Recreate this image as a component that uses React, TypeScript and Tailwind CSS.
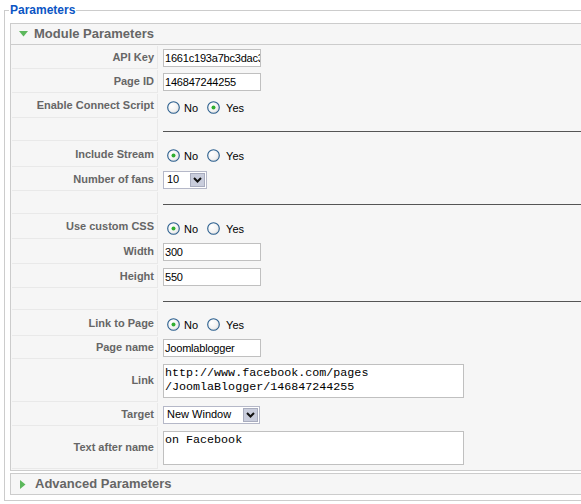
import React from "react";

const label = "text-[11px] font-bold text-[#666] text-right pr-[3px]";

function Radio({ checked }: { checked?: boolean }) {
  return (
    <svg width="13" height="13" viewBox="0 0 13 13" className="shrink-0">
      <defs>
        <radialGradient id="rg" cx="0.35" cy="0.35" r="0.8">
          <stop offset="0" stopColor="#ffffff" />
          <stop offset="0.6" stopColor="#f2f2f2" />
          <stop offset="1" stopColor="#d4d4d4" />
        </radialGradient>
      </defs>
      <circle cx="6.5" cy="6.5" r="5.8" fill="url(#rg)" stroke="#2b5f8e" strokeWidth="1.1" />
      {checked && <circle cx="6.5" cy="6.5" r="2" fill="#2fae2f" />}
    </svg>
  );
}

function RadioPair({ yes }: { yes?: boolean }) {
  return (
    <div className="flex items-center ml-[4px] mt-[2px] text-[11px] text-black">
      <Radio checked={!yes} />
      <span className="ml-[4px] mt-[2px]">No</span>
      <span className="ml-[9px]">
        <Radio checked={yes} />
      </span>
      <span className="ml-[6px] mt-[2px]">Yes</span>
    </div>
  );
}

function Select({ value, w }: { value: string; w: string }) {
  return (
    <div className={`${w} h-[18px] flex items-center bg-white border border-[#b5b8c8] text-[11px] text-black`}>
      <span className="flex-1 pl-[3px]">{value}</span>
      <span className="w-[15px] h-[14px] mr-px flex items-center justify-center bg-[#c9cddc] border border-[#a8acbe]">
        <svg width="9" height="6" viewBox="0 0 9 6">
          <path d="M1 1 L4.5 4.5 L8 1" fill="none" stroke="#111" strokeWidth="2" />
        </svg>
      </span>
    </div>
  );
}

function Input({ value }: { value: string }) {
  return (
    <div className="w-[98px] h-[18px] bg-white border border-[#c0c0c0] text-[11px] tracking-[-0.2px] text-black pl-px leading-[16px] overflow-hidden whitespace-nowrap">
      {value}
    </div>
  );
}

function TextArea({ lines }: { lines: string[] }) {
  return (
    <div className="w-[301px] h-[34px] bg-white border border-[#c0c0c0] pl-px pt-px text-[11.7px] leading-[14px] text-black font-['Liberation_Mono',monospace]">
      {lines.map((l) => (
        <div key={l}>{l}</div>
      ))}
    </div>
  );
}

function Row({ name, h, children }: { name?: string; h: string; children?: React.ReactNode }) {
  return (
    <div className={`flex ${h}`}>
      <div className={`w-[146px] shrink-0 flex items-center justify-end bg-[#f6f6f6] border-b border-r border-[#e9e9e9] ${label}`}>
        {name}
      </div>
      <div className="flex-1 flex items-center pl-[5px]">{children}</div>
    </div>
  );
}

function Rule() {
  return <div className="w-full border-t border-[#555] mt-[3px]" />;
}

export default function App() {
  return (
    <div className="w-full h-[504px] overflow-hidden bg-white font-['Liberation_Sans',Arial,sans-serif]">
      <div className="w-[640px]">
        <fieldset className="ml-[4px] mt-[3px] border border-[#ccc] px-[5px] pb-[5px]">
          <legend className="ml-[-1px] px-px text-[12px] font-bold text-[#0b55c4] leading-[15px]">
            Parameters
          </legend>

          {/* MODULE PARAMETERS */}
          <div className="mt-[5px] border border-[#ccc] bg-[#f6f6f6]">
            <div className="h-[21px] flex items-center pl-[8px] border-b border-[#ccc] text-[13px] font-bold text-[#666]">
              <svg width="9" height="6" viewBox="0 0 9 6" className="mr-[6px]">
                <path d="M0 0 H9 L4.5 5.5 Z" fill="#5cb85c" />
              </svg>
              Module Parameters
            </div>
            <div className="flex flex-col gap-px p-px">
              <Row name="API Key" h="h-[23px]">
                <Input value="1661c193a7bc3dac3" />
              </Row>
              <Row name="Page ID" h="h-[23px]">
                <Input value="146847244255" />
              </Row>
              <Row name="Enable Connect Script" h="h-[24px]">
                <RadioPair yes />
              </Row>
              <Row h="h-[22px]">
                <Rule />
              </Row>
              <Row name="Include Stream" h="h-[25px]">
                <RadioPair />
              </Row>
              <Row name="Number of fans" h="h-[23px]">
                <Select value="10" w="w-[44px]" />
              </Row>
              <Row h="h-[22px]">
                <Rule />
              </Row>
              <Row name="Use custom CSS" h="h-[24px]">
                <RadioPair />
              </Row>
              <Row name="Width" h="h-[24px]">
                <Input value="300" />
              </Row>
              <Row name="Height" h="h-[23px]">
                <Input value="550" />
              </Row>
              <Row h="h-[21px]">
                <Rule />
              </Row>
              <Row name="Link to Page" h="h-[25px]">
                <RadioPair />
              </Row>
              <Row name="Page name" h="h-[22px]">
                <Input value="Joomlablogger" />
              </Row>
              <Row name="Link" h="h-[42px]">
                <TextArea lines={["http://www.facebook.com/pages", "/JoomlaBlogger/146847244255"]} />
              </Row>
              <Row name="Target" h="h-[23px]">
                <Select value="New Window" w="w-[97px]" />
              </Row>
              <Row name="Text after name" h="h-[42px]">
                <TextArea lines={["on Facebook"]} />
              </Row>
            </div>
          </div>

          {/* ADVANCED PARAMETERS */}
          <div className="mt-[2px] border border-[#ccc] bg-[#f6f6f6]">
            <div className="h-[20px] flex items-center pl-[9px] text-[13px] font-bold text-[#666]">
              <svg width="6" height="9" viewBox="0 0 6 9" className="mr-[9px]">
                <path d="M0 0 L5.5 4.5 L0 9 Z" fill="#5cb85c" />
              </svg>
              Advanced Parameters
            </div>
          </div>
        </fieldset>
      </div>
    </div>
  );
}
